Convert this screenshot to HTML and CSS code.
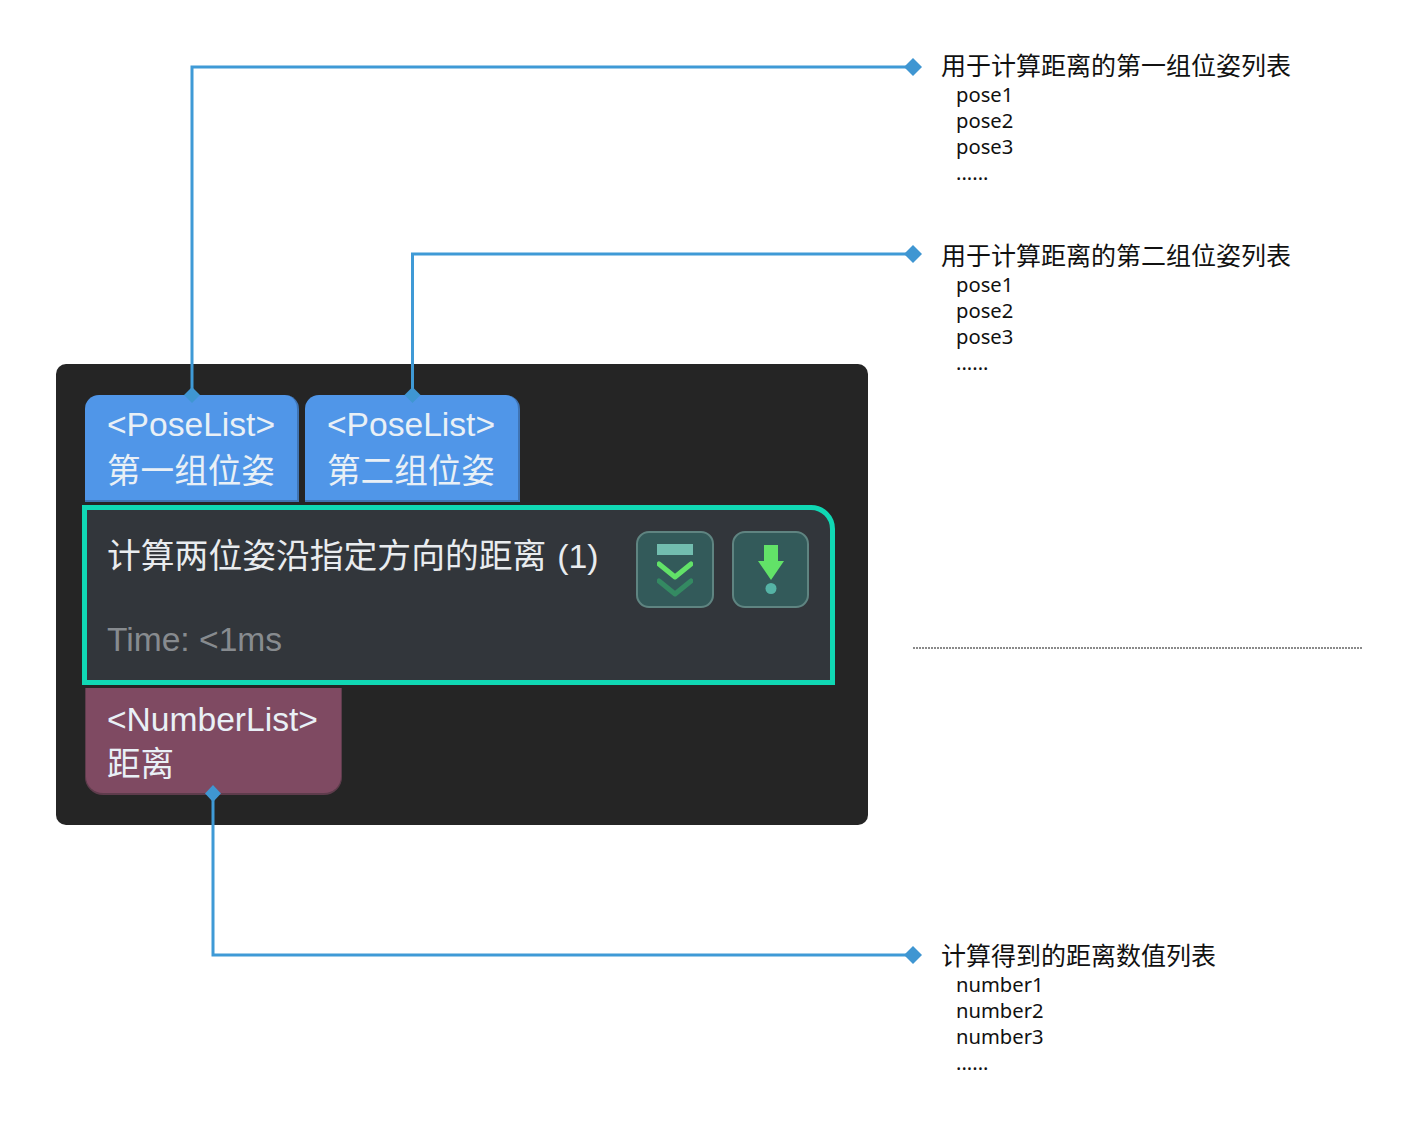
FILE: index.html
```html
<!DOCTYPE html>
<html lang="zh-CN">
<head>
<meta charset="utf-8">
<title>计算两位姿沿指定方向的距离</title>
<link rel="stylesheet" href="styles.css">
</head>
<body>
<div class="canvas">
  <section class="node">
    <div class="ports">
      <div class="port port-in port-a"><span>&lt;PoseList&gt;</span><span>第一组位姿</span></div>
      <div class="port port-in port-b"><span>&lt;PoseList&gt;</span><span>第二组位姿</span></div>
    </div>
    <div class="main">
      <div class="main-top">
        <div class="title">计算两位姿沿指定方向的距离 (1)</div>
        <div class="buttons">
          <div class="btn btn-wide">
            <svg class="icon-low" width="36" height="54" viewBox="0 0 36 54">
              <rect x="0" y="0" width="36" height="11" fill="#72bdaf"/>
              <path d="M2 20 L18 33 L34 20" fill="none" stroke="#62e268" stroke-width="5" stroke-linecap="round" stroke-linejoin="round"/>
              <path d="M2 37 L18 50 L34 37" fill="none" stroke="#348a62" stroke-width="5" stroke-linecap="round" stroke-linejoin="round"/>
            </svg>
          </div>
          <div class="btn">
            <svg width="28" height="50" viewBox="0 0 28 50">
              <path d="M7 0 H21 V16 H27 L14 35 L1 16 H7 Z" fill="#62e268"/>
              <circle cx="14" cy="43.500" r="5.500" fill="#55b3a5"/>
            </svg>
          </div>
        </div>
      </div>
      <div class="time">Time: &lt;1ms</div>
    </div>
    <div class="port port-out"><span>&lt;NumberList&gt;</span><span>距离</span></div>
  </section>

  <svg class="wires" width="1403" height="1121" viewBox="0 0 1403 1121">
    <g fill="none" stroke="#3f9ad6" stroke-width="3">
      <path d="M192 395 V67 H912"/>
      <path d="M412.500 395 V254 H912"/>
      <path d="M213 793 V955 H912"/>
    </g>
    <g fill="#3f96d2">
      <path d="M192 387 L200 395 L192 403 L184 395 Z"/>
      <path d="M412.500 387 L420.500 395 L412.500 403 L404.500 395 Z"/>
      <path d="M213 785 L221 793.500 L213 802 L205 793.500 Z"/>
      <path d="M913 58 L922 67 L913 76 L904 67 Z"/>
      <path d="M913 245 L922 254 L913 263 L904 254 Z"/>
      <path d="M913 946 L922 955 L913 964 L904 955 Z"/>
    </g>
  </svg>

  <div class="note note-a">
    <div class="note-title">用于计算距离的第一组位姿列表</div>
    <ul class="note-list"><li>pose1</li><li>pose2</li><li>pose3</li><li>......</li></ul>
  </div>
  <div class="note note-b">
    <div class="note-title">用于计算距离的第二组位姿列表</div>
    <ul class="note-list"><li>pose1</li><li>pose2</li><li>pose3</li><li>......</li></ul>
  </div>
  <div class="note note-c">
    <div class="note-title">计算得到的距离数值列表</div>
    <ul class="note-list"><li>number1</li><li>number2</li><li>number3</li><li>......</li></ul>
  </div>
  <div class="dotted"></div>
</div>
</body>
</html>
```
FILE: styles.css
```css
* { box-sizing: border-box; }
html, body { margin: 0; padding: 0; background: #fff; }
.canvas {
  position: relative;
  width: 1403px;
  height: 1121px;
  overflow: hidden;
}
.node {
  position: absolute;
  left: 56px;
  top: 364px;
  width: 812px;
  height: 461px;
  padding: 31px 0 0 26px;
  background: #252525;
  border-radius: 10px;
  font-family: "Liberation Sans", "Noto Sans CJK SC", sans-serif;
  font-size: 33.600px;
  color: #e9f0f6;
}
.ports { display: flex; gap: 6px; margin-left: 3px; }
.port {
  display: flex;
  flex-direction: column;
  padding: 6px 22px 0;
  line-height: 47px;
  white-space: nowrap;
}
.port-in {
  width: 214px;
  height: 107px;
  background: #5096e8;
  border-radius: 14px 14px 0 0;
  border: solid #3f74b4;
  border-width: 0 2px 2px 0;
}
.port-b { width: 215px; }
.port-out {
  width: 257px;
  height: 107px;
  margin: 3px 0 0 3px;
  background: #7f4a62;
  border-radius: 0 0 18px 18px;
  border: solid #5e3c4c;
  border-width: 0 1px 2px 1px;
  padding: 9px 21px 0;
  line-height: 45px;
}
.main {
  width: 753px;
  height: 180px;
  margin-top: 3px;
  padding: 21px 21px 0 20px;
  background: #32363b;
  border: 5px solid #10d8b4;
  border-radius: 0 24px 0 0;
  color: #e9ecef;
}
.main-top { display: flex; justify-content: space-between; align-items: flex-start; }
.title {
  margin-top: 3px;
  font-size: 33.800px;
  word-spacing: 1.500px;
  line-height: 44px;
  white-space: nowrap;
}
.buttons { display: flex; gap: 18px; }
.btn {
  display: flex;
  align-items: center;
  justify-content: center;
  width: 77px;
  height: 77px;
  background: #335a5a;
  border: 2px solid #5f8481;
  border-radius: 13px;
}
.btn-wide { width: 78px; }
.icon-low { margin-top: 2px; }
.time {
  margin-top: 10px;
  color: #878b8f;
  line-height: 44px;
  white-space: nowrap;
}
.wires { position: absolute; left: 0; top: 0; pointer-events: none; }
.note {
  position: absolute;
  left: 941px;
  color: #111;
  font-family: "Noto Sans", "Noto Sans CJK SC", sans-serif;
}
.note-a { top: 47px; }
.note-b { top: 237px; }
.note-c { top: 937px; }
.note-title {
  font-family: "Noto Sans CJK SC", sans-serif;
  font-size: 25px;
  line-height: 34px;
  white-space: nowrap;
}
.note-list {
  list-style: none;
  margin: 0;
  padding: 0 0 0 15px;
  font-size: 20.200px;
  line-height: 26px;
}
.dotted {
  position: absolute;
  left: 913px;
  top: 647px;
  width: 450px;
  height: 2px;
  background: repeating-linear-gradient(90deg, #8a8a8a 0 2px, transparent 2px 3px);
}
```
